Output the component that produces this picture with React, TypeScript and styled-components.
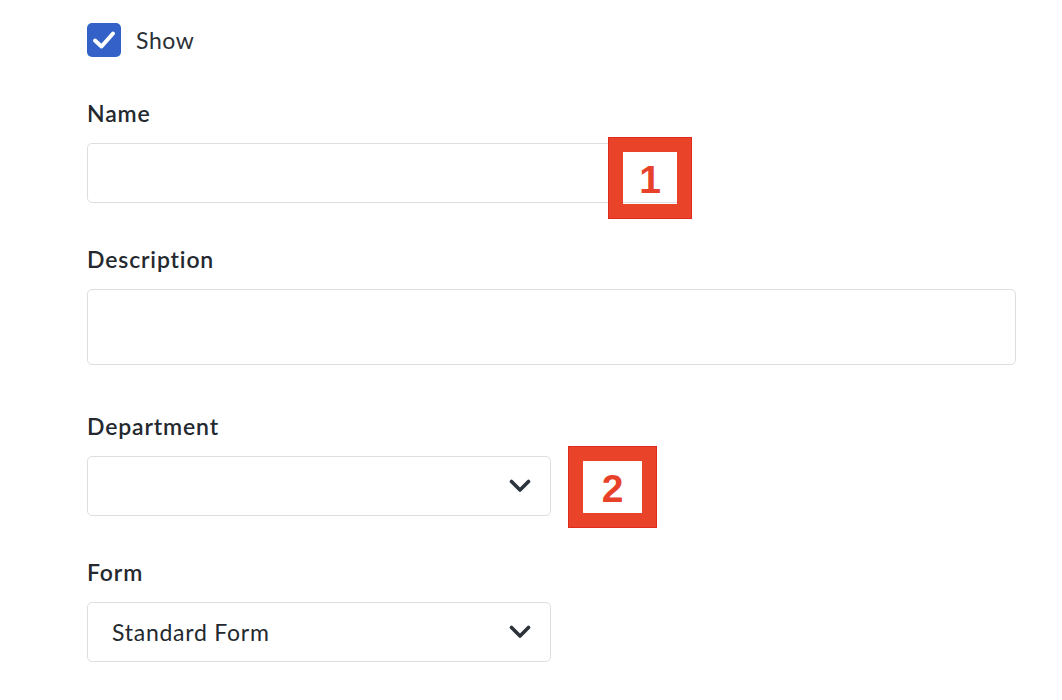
import styled, { createGlobalStyle } from 'styled-components';

const GlobalStyle = createGlobalStyle`
    body {
        margin: 0;
        background: #ffffff;
        font-family: Lato, "Open Sans", sans-serif;
        color: #24292f;
    }
`;

const StyledPage = styled.div`
    position: relative;
    display: flex;
    flex-direction: column;
    align-items: flex-start;
    width: 1062px;
    height: 700px;
    overflow: hidden;
    padding: 23px 0 0 87px;
    box-sizing: border-box;
`;

const StyledCheckRow = styled.label`
    display: flex;
    flex-direction: row;
    align-items: center;
    gap: 15px;
    font-size: 23px;
    letter-spacing: 0.6px;
    color: #2b3036;
    height: 34px;
`;

const StyledCheckbox = styled.span`
    width: 34px;
    height: 34px;
    border-radius: 5px;
    background-color: #3361c8;
    display: flex;
    align-items: center;
    justify-content: center;
`;

const StyledField = styled.div<{ $extraBottom?: number }>`
    display: flex;
    flex-direction: column;
    margin-top: 42px;
    margin-bottom: ${({ $extraBottom = 0 }) => $extraBottom}px;
`;

const StyledLabel = styled.div`
    font-size: 23px;
    line-height: 28px;
    font-weight: 600;
    letter-spacing: 0.85px;
    color: #24292f;
    margin-bottom: 16px;
`;

const StyledInput = styled.div<{ $width: number; $height: number }>`
    width: ${({ $width }) => $width}px;
    height: ${({ $height }) => $height}px;
    box-sizing: border-box;
    border: 1px solid #dcdfe2;
    border-radius: 5px;
    background: #ffffff;
`;

const StyledSelect = styled.div`
    width: 464px;
    height: 60px;
    box-sizing: border-box;
    border: 1px solid #dcdfe2;
    border-radius: 5px;
    background: #ffffff;
    display: flex;
    flex-direction: row;
    align-items: center;
    justify-content: space-between;
    padding: 0 19px 0 24px;
    font-size: 23px;
    letter-spacing: 0.75px;
    color: #24292f;
`;

const StyledMarker = styled.div<{ $left: number; $top: number; $width: number }>`
    position: absolute;
    left: ${({ $left }) => $left}px;
    top: ${({ $top }) => $top}px;
    width: ${({ $width }) => $width}px;
    height: 82px;
    box-sizing: border-box;
    border: 15px solid #e9442a;
    outline: 1px solid #e02a1c;
    outline-offset: -1px;
    display: flex;
    align-items: center;
    justify-content: center;
    font-family: "Liberation Sans", Arial, sans-serif;
    font-weight: 700;
    font-size: 39px;
    color: #e8412a;
    padding-top: 4px;
`;

const Chevron = () => (
    <svg width="22" height="14" viewBox="0 0 22 14" fill="none">
        <polyline
            points="2.5,2.5 11,11 19.5,2.5"
            stroke="#2d333a"
            strokeWidth="3.6"
            strokeLinecap="round"
            strokeLinejoin="round"
        />
    </svg>
);

const CheckMark = () => (
    <svg width="26" height="22" viewBox="0 0 26 22" fill="none">
        <polyline
            points="4,11.5 10.5,17.5 22,4.5"
            stroke="#ffffff"
            strokeWidth="4"
            strokeLinecap="round"
            strokeLinejoin="round"
        />
    </svg>
);

const App = () => {
    return (
        <StyledPage>
            <GlobalStyle />
            <StyledCheckRow>
                <StyledCheckbox>
                    <CheckMark />
                </StyledCheckbox>
                Show
            </StyledCheckRow>

            <StyledField>
                <StyledLabel>Name</StyledLabel>
                <StyledInput $width={600} $height={60} />
            </StyledField>

            <StyledField $extraBottom={5}>
                <StyledLabel>Description</StyledLabel>
                <StyledInput $width={929} $height={76} />
            </StyledField>

            <StyledField>
                <StyledLabel>Department</StyledLabel>
                <StyledSelect>
                    <span />
                    <Chevron />
                </StyledSelect>
            </StyledField>

            <StyledField>
                <StyledLabel>Form</StyledLabel>
                <StyledSelect>
                    <span>Standard Form</span>
                    <Chevron />
                </StyledSelect>
            </StyledField>

            <StyledMarker $left={608} $top={137} $width={84}>
                1
            </StyledMarker>
            <StyledMarker $left={568} $top={446} $width={89}>
                2
            </StyledMarker>
        </StyledPage>
    );
};

export default App;
